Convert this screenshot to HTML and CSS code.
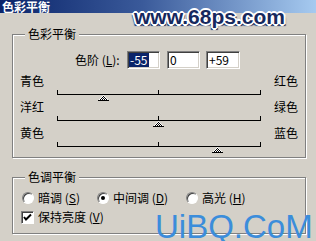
FILE: index.html
```html
<!DOCTYPE html>
<html>
<head>
<meta charset="utf-8">
<title>色彩平衡</title>
<link rel="stylesheet" href="styles.css">
</head>
<body>
<div class="titlebar"><span class="title-text">色彩平衡</span></div>

<div class="group g1">
  <span class="legend">色彩平衡</span>
  <div class="levels">
    <span class="lv-label">色阶 (<u>L</u>):</span>
    <span class="field"><span class="sel">-55</span></span>
    <span class="field">0</span>
    <span class="field f3">+59</span>
  </div>
  <div class="sliders">
    <span class="sl-left">青色</span>
    <div class="track">
      <i class="line"></i><i class="tick t0"></i><i class="tick t1"></i><i class="tick t2"></i>
      <svg class="thumb" style="left:41px" width="11" height="6" viewBox="0 0 11 6"><defs><pattern id="d1" width="2" height="2" patternUnits="userSpaceOnUse"><rect width="2" height="2" fill="#fff"/><rect width="1" height="1" fill="#000"/><rect x="1" y="1" width="1" height="1" fill="#000"/></pattern></defs><polygon points="5.5,0 11,6 0,6" fill="url(#d1)"/><rect x="0" y="5" width="11" height="1" fill="#000"/></svg>
    </div>
    <span class="sl-right">红色</span>

    <span class="sl-left">洋红</span>
    <div class="track">
      <i class="line"></i><i class="tick t0"></i><i class="tick t1"></i><i class="tick t2"></i>
      <svg class="thumb" style="left:96px" width="11" height="6" viewBox="0 0 11 6"><defs><pattern id="d2" width="2" height="2" patternUnits="userSpaceOnUse"><rect width="2" height="2" fill="#fff"/><rect width="1" height="1" fill="#000"/><rect x="1" y="1" width="1" height="1" fill="#000"/></pattern></defs><polygon points="5.5,0 11,6 0,6" fill="url(#d2)"/><rect x="0" y="5" width="11" height="1" fill="#000"/></svg>
    </div>
    <span class="sl-right">绿色</span>

    <span class="sl-left">黄色</span>
    <div class="track">
      <i class="line"></i><i class="tick t0"></i><i class="tick t1"></i><i class="tick t2"></i>
      <svg class="thumb" style="left:155px" width="11" height="6" viewBox="0 0 11 6"><defs><pattern id="d3" width="2" height="2" patternUnits="userSpaceOnUse"><rect width="2" height="2" fill="#fff"/><rect width="1" height="1" fill="#000"/><rect x="1" y="1" width="1" height="1" fill="#000"/></pattern></defs><polygon points="5.5,0 11,6 0,6" fill="url(#d3)"/><rect x="0" y="5" width="11" height="1" fill="#000"/></svg>
    </div>
    <span class="sl-right">蓝色</span>
  </div>
</div>

<div class="group g2">
  <span class="legend">色调平衡</span>
  <div class="radios">
    <label class="opt"><span class="radio"></span><span class="txt">暗调 (<u>S</u>)</span></label>
    <label class="opt"><span class="radio on"></span><span class="txt">中间调 (<u>D</u>)</span></label>
    <label class="opt"><span class="radio"></span><span class="txt">高光 (<u>H</u>)</span></label>
  </div>
  <label class="check-row"><span class="checkbox"><svg width="11" height="11" viewBox="0 0 11 11"><polyline points="2,5 4,7.5 9,2.5" fill="none" stroke="#000" stroke-width="2"/></svg></span><span class="txt">保持亮度 (<u>V</u>)</span></label>
</div>

<div class="wm wm1">www.68ps.com</div>
<div class="wm wm2">UiBQ.CoM</div>
</body>
</html>
```

FILE: styles.css
```css
html, body {
  margin: 0;
  padding: 0;
}
body {
  width: 316px;
  height: 241px;
  overflow: hidden;
  position: relative;
  background: #d4d0c8;
  font-family: "Noto Sans CJK SC", "DejaVu Sans", sans-serif;
  font-size: 12px;
  line-height: 14px;
  color: #000;
}
u { text-decoration: underline; text-underline-offset: 1px; }

.titlebar {
  height: 13px;
  padding-left: 2px;
  background: linear-gradient(to right, #0a246a 0%, #3a5a9a 45%, #a6caf0 100%);
  color: #fff;
  font-weight: bold;
  display: flex;
  align-items: center;
}
.title-text {
  font-size: 12px;
  line-height: 12px;
}

.group {
  position: relative;
  width: 294px;
  box-sizing: border-box;
  margin-left: 12px;
  border: 1px solid #808080;
  box-shadow: inset 1px 1px 0 #fff, 1px 1px 0 #fff;
}
.legend {
  position: absolute;
  top: -8px;
  left: 12px;
  padding: 0 3px;
  background: #d4d0c8;
  line-height: 14px;
}
.g1 {
  margin-top: 21px;
  padding-bottom: 6px;
}
.levels {
  display: flex;
  align-items: center;
  margin-top: 16px;
  padding-left: 62px;
  height: 18px;
}
.lv-label {
  width: 52px;
  white-space: nowrap;
}
.field {
  width: 33px;
  height: 18px;
  box-sizing: border-box;
  border: 1px solid;
  border-color: #808080 #fff #fff #808080;
  box-shadow: inset 1px 1px 0 #404040, inset -1px -1px 0 #d4d0c8;
  background: #fff;
  padding: 1px 0 0 2px;
  line-height: 14px;
  margin-right: 7px;
}
.field.f3 { width: 34px; margin-left: -1px; }
.sel {
  display: inline-block;
  background: #0a246a;
  color: #fff;
  margin-left: -1px;
  padding: 0 2px 0 1px;
}

.sliders {
  display: grid;
  grid-template-columns: 37px 204px auto;
  grid-auto-rows: 26px;
  margin-top: 4px;
  padding-left: 7px;
}
.sl-left { align-self: start; padding-top: 1px; }
.sl-right { align-self: start; padding-top: 1px; padding-left: 13px; }
.track { position: relative; }
.track .line {
  position: absolute;
  left: 0;
  top: 21px;
  width: 204px;
  height: 1px;
  background: #000;
}
.track .tick {
  position: absolute;
  top: 17px;
  width: 1px;
  height: 4px;
  background: #000;
}
.track .t0 { left: 0; }
.track .t1 { left: 101px; }
.track .t2 { left: 203px; }
.thumb {
  position: absolute;
  top: 22px;
  display: block;
  shape-rendering: crispEdges;
}

.g2 {
  margin-top: 19px;
  padding: 13px 0 9px 0;
}
.radios {
  display: grid;
  grid-template-columns: 75px 89px auto;
  padding-left: 9px;
  height: 14px;
}
.opt, .check-row {
  display: flex;
  align-items: center;
  gap: 4px;
  white-space: nowrap;
  height: 14px;
}
.txt { white-space: nowrap; }
.radio {
  position: relative;
  width: 12px;
  height: 12px;
  box-sizing: border-box;
  border-radius: 50%;
  border: 1px solid;
  border-color: #808080 #fff #fff #808080;
  box-shadow: inset 1px 1px 0 #404040;
  background: #fff;
  flex: none;
}
.radio.on::after {
  content: "";
  position: absolute;
  left: 3px;
  top: 3px;
  width: 4px;
  height: 4px;
  border-radius: 50%;
  background: #000;
}
.check-row {
  margin-top: 5px;
  padding-left: 8px;
}
.checkbox {
  width: 13px;
  height: 13px;
  box-sizing: border-box;
  border: 1px solid;
  border-color: #808080 #fff #fff #808080;
  box-shadow: inset 1px 1px 0 #404040;
  background: #fff;
  display: flex;
  align-items: center;
  justify-content: center;
  flex: none;
}
.checkbox svg { display: block; }

.wm {
  position: absolute;
  white-space: nowrap;
  font-family: "Liberation Sans", Arial, sans-serif;
  font-weight: bold;
}
.wm1 {
  left: 134px;
  top: 6px;
  font-size: 21px;
  line-height: 21px;
  color: #17295e;
  text-shadow:
    1px 0 0 #fff, -1px 0 0 #fff, 0 1px 0 #fff, 0 -1px 0 #fff,
    1px 1px 0 #fff, -1px -1px 0 #fff, 1px -1px 0 #fff, -1px 1px 0 #fff,
    2px 0 0 #fff, -2px 0 0 #fff, 0 2px 0 #fff, 0 -2px 0 #fff,
    2px 2px 1px #17295e, -2px 2px 1px #17295e;
}
.wm2 {
  left: 155px;
  top: 213px;
  font-size: 33px;
  line-height: 28px;
  font-weight: normal;
  color: #3b8ddb;
}
```
